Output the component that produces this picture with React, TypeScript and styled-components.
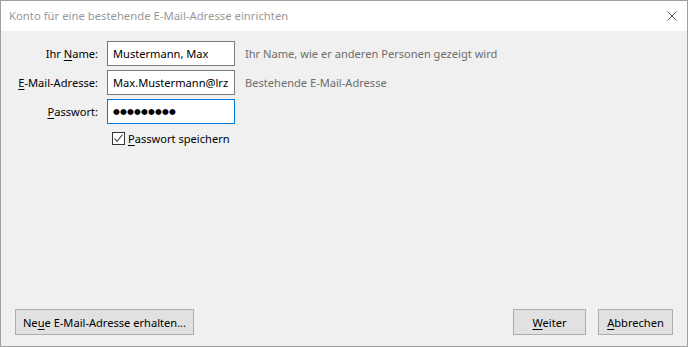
import React from "react";
import styled, { createGlobalStyle } from "styled-components";

const Global = createGlobalStyle`
  html, body { margin: 0; padding: 0; background: #ffffff; }
  * { box-sizing: border-box; }
  body { font-family: "Segoe UI", "Noto Sans", "Liberation Sans", sans-serif; font-size: 11.1px; }
`;

const Window = styled.div`
  width: 688px;
  height: 347px;
  border: 1px solid #a0a0a0;
  display: flex;
  flex-direction: column;
  background: #f0f0f0;
  overflow: hidden;
`;

const TitleBar = styled.div`
  height: 30px;
  background: #ffffff;
  display: flex;
  align-items: center;
  justify-content: space-between;
  padding: 0 10px 0 8px;
  flex-shrink: 0;
`;

const Title = styled.span`
  color: #999999;
  font-size: 11.3px;
  padding-bottom: 1px;
`;

const Close = styled.svg`
  width: 10px;
  height: 10px;
`;

const Body = styled.div`
  flex: 1;
  display: flex;
  flex-direction: column;
  padding: 10px 14px 11px 14px;
`;

const Form = styled.div`
  display: grid;
  grid-template-columns: 83px 128px auto;
  column-gap: 9px;
  row-gap: 4px;
  align-items: center;
`;

const Label = styled.label`
  text-align: right;
  color: #000;
  white-space: nowrap;
`;

const Input = styled.input<{ $focused?: boolean; $dots?: boolean }>`
  width: 128px;
  height: 25px;
  border: 1px solid ${(p) => (p.$focused ? "#0078d7" : "#7a7a7a")};
  background: #ffffff;
  font-family: ${(p) => (p.$dots ? '"DejaVu Sans", sans-serif' : "inherit")};
  font-size: ${(p) => (p.$dots ? "7.8px" : "11.1px")};
  letter-spacing: ${(p) => (p.$dots ? "0.2px" : "0")};
  color: #000;
  padding: 0 5px;
  outline: none;
  margin: 0;
`;

const Hint = styled.span`
  color: #6d6d6d;
  padding-left: 1px;
  white-space: nowrap;
`;

const CheckRow = styled.label`
  grid-column: 2 / span 2;
  display: flex;
  align-items: center;
  gap: 3px;
  padding-left: 5px;
  margin-top: 3px;
  color: #000;
`;

const Box = styled.span`
  width: 13px;
  height: 13px;
  border: 1px solid #333;
  background: #fff;
  display: inline-flex;
  align-items: center;
  justify-content: center;
`;

const Spacer = styled.div`
  flex: 1;
`;

const Footer = styled.div`
  display: flex;
  align-items: center;
  gap: 12px;
`;

const Button = styled.button<{ $w: number }>`
  width: ${(p) => p.$w}px;
  height: 26px;
  background: #e1e1e1;
  border: 1px solid #adadad;
  font-family: inherit;
  font-size: 11.1px;
  color: #000;
  padding: 0;
  margin: 0;
`;

const Push = styled.div`
  flex: 1;
`;

const U = styled.u`
  text-decoration: underline;
  text-underline-offset: 2px;
`;

export default function App() {
  return (
    <>
      <Global />
      <Window>
        <TitleBar>
          <Title>Konto für eine bestehende E-Mail-Adresse einrichten</Title>
          <Close viewBox="0 0 10 10">
            <path d="M0.5 0.5 L9.5 9.5 M9.5 0.5 L0.5 9.5" stroke="#555" strokeWidth="1" fill="none" />
          </Close>
        </TitleBar>
        <Body>
          <Form>
            <Label>
              Ihr <U>N</U>ame:
            </Label>
            <Input defaultValue="Mustermann, Max" />
            <Hint>Ihr Name, wie er anderen Personen gezeigt wird</Hint>
            <Label>
              <U>E</U>-Mail-Adresse:
            </Label>
            <Input defaultValue="Max.Mustermann@lrz.de" />
            <Hint>Bestehende E-Mail-Adresse</Hint>
            <Label>
              <U>P</U>asswort:
            </Label>
            <Input defaultValue="●●●●●●●●●" $focused $dots />
            <span />
            <span />
            <CheckRow>
              <Box>
                <svg width="11" height="11" viewBox="0 0 11 11">
                  <path d="M1.5 5.5 L4 8.5 L9.5 1.5" stroke="#333" strokeWidth="1.1" fill="none" />
                </svg>
              </Box>
              <span>
                <U>P</U>asswort speichern
              </span>
            </CheckRow>
          </Form>
          <Spacer />
          <Footer>
            <Button $w={179}>
              Ne<U>u</U>e E-Mail-Adresse erhalten...
            </Button>
            <Push />
            <Button $w={73}>
              <U>W</U>eiter
            </Button>
            <Button $w={75}>
              <U>A</U>bbrechen
            </Button>
          </Footer>
        </Body>
      </Window>
    </>
  );
}
